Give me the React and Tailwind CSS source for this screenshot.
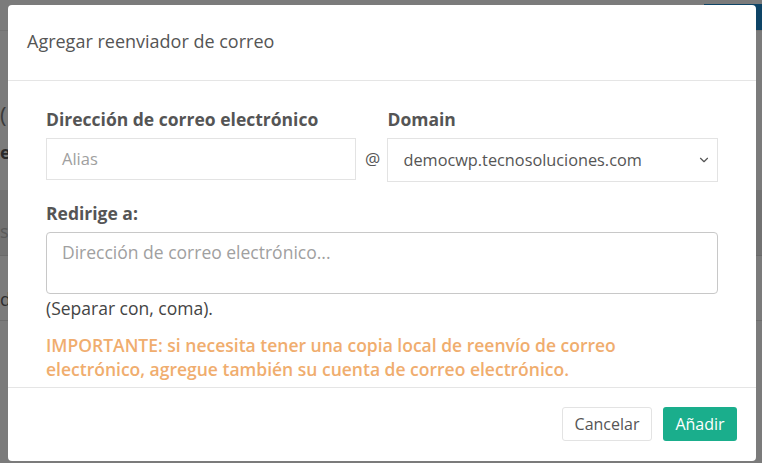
import { ChevronDown } from "lucide-react";

function Backdrop() {
  return (
    <div className="absolute inset-0 bg-[#7b7b7b] overflow-hidden">
      <div className="absolute right-0 top-[4px] w-[58px] h-[26px] bg-[#0e4466]" />
      <div className="absolute left-0 top-[30px] w-full h-px bg-[#727272]" />
      <div className="absolute left-0 top-[103px] text-[22px] leading-none text-[#3a3a3a]">(</div>
      <div className="absolute left-0 top-[143px] text-[18px] font-bold leading-none text-[#2a2a2a]">e</div>
      <div className="absolute left-0 top-[190px] w-full h-[66px] bg-[#727272]" />
      <div className="absolute left-0 top-[222px] text-[18px] leading-none text-[#5a5a5a]">s</div>
      <div className="absolute left-0 top-[255px] w-full h-px bg-[#6a6a6a]" />
      <div className="absolute left-0 top-[290px] text-[18px] leading-none text-[#2e2e2e]">d</div>
      <div className="absolute left-0 top-[320px] w-full h-px bg-[#6d6d6d]" />
    </div>
  );
}

export default function App() {
  return (
    <div
      className="relative w-[762px] h-[463px] overflow-hidden"
      style={{ fontFamily: '"Open Sans", "Noto Sans", sans-serif' }}
    >
      <Backdrop />
      <div className="absolute left-[8px] top-[5px] w-[748px] h-[456px] bg-white rounded-[4px] flex flex-col">
        <div className="h-[76px] border-b border-[#e5e5e5] flex items-center px-[19px]">
          <h4 className="text-[18px] text-[#555] pb-[2px]">Agregar reenviador de correo</h4>
        </div>
        <div className="px-[38px] pt-[25px] flex flex-col">
          <div className="flex items-end gap-0">
            <div className="flex flex-col w-[310px]">
              <label className="text-[17.5px] font-bold text-[#555] leading-[26px] mb-[6px]">
                Dirección de correo electrónico
              </label>
              <div className="h-[42px] border border-[#e3e3e3] flex items-center px-[15px] text-[16.5px] text-[#a0a0a0]">
                Alias
              </div>
            </div>
            <div className="w-[32px] h-[42px] flex items-center justify-center text-[17px] text-[#555] pl-[2px]">@</div>
            <div className="flex flex-col w-[331px]">
              <label className="text-[17.5px] font-bold text-[#555] leading-[26px] mb-[6px]">Domain</label>
              <div className="h-[44px] border border-[#e3e3e3] flex items-center justify-between pl-[15px] pr-[6px] text-[16.3px] text-[#555] -mb-[2px]">
                <span>democwp.tecnosoluciones.com</span>
                <ChevronDown size={14} strokeWidth={2} className="text-[#555]" />
              </div>
            </div>
          </div>
          <label className="mt-[20px] text-[17.5px] font-bold text-[#555] leading-[26px] mb-[6px]">Redirige a:</label>
          <div className="h-[62px] border border-[#c8c8c8] rounded-[4px] px-[15px] pt-[6px] text-[17.5px] text-[#a0a0a0]">
            Dirección de correo electrónico...
          </div>
          <p className="mt-[1px] text-[17.5px] text-[#444] leading-[26px]">(Separar con, coma).</p>
          <p className="mt-[12px] text-[17.5px] font-semibold text-[#f0ad6e] leading-[24px] pr-[20px]">
            IMPORTANTE: si necesita tener una copia local de reenvío de correo electrónico, agregue también su cuenta de
            correo electrónico.
          </p>
        </div>
        <div className="mt-[6px] border-t border-[#e5e5e5] flex justify-end gap-[11px] pt-[19px] pr-[19px]">
          <button className="h-[34px] w-[90px] border border-[#e3e3e3] rounded-[3px] text-[16px] text-[#555] bg-white">
            Cancelar
          </button>
          <button className="h-[34px] w-[74px] rounded-[3px] text-[16px] text-white bg-[#1aae8c]">Añadir</button>
        </div>
      </div>
    </div>
  );
}
